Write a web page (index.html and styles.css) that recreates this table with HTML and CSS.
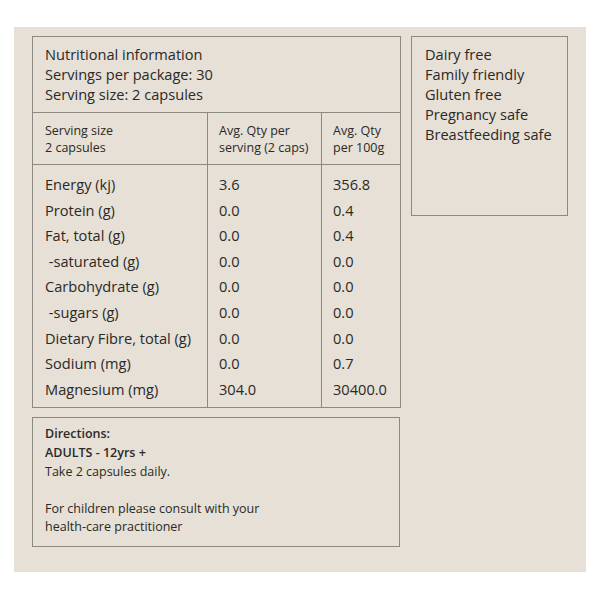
FILE: index.html
```html
<!DOCTYPE html>
<html lang="en">
<head>
<meta charset="utf-8">
<title>Nutritional information</title>
<link rel="stylesheet" href="styles.css">
</head>
<body>
<div class="panel">
  <div class="left-col">
    <table class="nutri">
      <colgroup>
        <col class="c1"><col class="c2"><col class="c3">
      </colgroup>
      <thead>
        <tr>
          <th colspan="3" class="intro">
            <div>Nutritional information</div>
            <div>Servings per package: 30</div>
            <div>Serving size: 2 capsules</div>
          </th>
        </tr>
        <tr class="sub">
          <th>Serving size<br>2 capsules</th>
          <th>Avg. Qty per<br>serving (2 caps)</th>
          <th>Avg. Qty<br>per 100g</th>
        </tr>
      </thead>
      <tbody>
        <tr class="first"><td>Energy (kj)</td><td>3.6</td><td>356.8</td></tr>
        <tr><td>Protein (g)</td><td>0.0</td><td>0.4</td></tr>
        <tr><td>Fat, total (g)</td><td>0.0</td><td>0.4</td></tr>
        <tr><td>&nbsp;-saturated (g)</td><td>0.0</td><td>0.0</td></tr>
        <tr><td>Carbohydrate (g)</td><td>0.0</td><td>0.0</td></tr>
        <tr><td>&nbsp;-sugars (g)</td><td>0.0</td><td>0.0</td></tr>
        <tr><td>Dietary Fibre, total (g)</td><td>0.0</td><td>0.0</td></tr>
        <tr><td>Sodium (mg)</td><td>0.0</td><td>0.7</td></tr>
        <tr class="last"><td>Magnesium (mg)</td><td>304.0</td><td>30400.0</td></tr>
      </tbody>
    </table>
    <div class="directions">
      <div class="strong">Directions:</div>
      <div class="strong">ADULTS - 12yrs +</div>
      <div>Take 2 capsules daily.</div>
      <div class="gap"></div>
      <div>For children please consult with your</div>
      <div>health-care practitioner</div>
    </div>
  </div>
  <div class="features">
    <div>Dairy free</div>
    <div>Family friendly</div>
    <div>Gluten free</div>
    <div>Pregnancy safe</div>
    <div>Breastfeeding safe</div>
  </div>
</div>
</body>
</html>
```
FILE: styles.css
```css
html, body {
  margin: 0;
  padding: 0;
  background: #ffffff;
}
body {
  font-family: "Open Sans", "Noto Sans", sans-serif;
  color: #2b2927;
}
.panel {
  margin: 27px 14px 0 14px;
  width: 572px;
  height: 545px;
  box-sizing: border-box;
  padding: 9px 18px;
  background: #e6e0d6;
  display: flex;
  align-items: flex-start;
  gap: 11px;
}
.left-col {
  width: 368px;
  display: flex;
  flex-direction: column;
  gap: 9px;
}
.nutri {
  width: 368px;
  border-collapse: collapse;
  table-layout: fixed;
  border: 1px solid #8d8880;
}
.nutri .c1 { width: 175px; }
.nutri .c2 { width: 114px; }
.nutri .c3 { width: 79px; }
.nutri th, .nutri td {
  text-align: left;
  font-weight: 400;
  vertical-align: top;
  padding: 0 0 0 11px;
}
.nutri .intro {
  font-size: 14.6px;
  line-height: 20px;
  padding: 7px 12px 8px 12px;
  border-bottom: 1px solid #8d8880;
}
.nutri .sub th {
  font-size: 12.5px;
  line-height: 17px;
  padding-top: 9px;
  padding-bottom: 8px;
  border-bottom: 1px solid #8d8880;
  border-right: 1px solid #8d8880;
}
.nutri td {
  font-size: 14.6px;
  line-height: 25.6px;
  border-right: 1px solid #8d8880;
  white-space: nowrap;
}
.nutri td:first-child, .nutri .sub th:first-child {
  padding-left: 12px;
}
.nutri tr.first td { padding-top: 7px; }
.nutri tr.last td { padding-bottom: 5px; }
.directions {
  border: 1px solid #8d8880;
  height: 130px;
  box-sizing: border-box;
  padding: 7px 12px 0 12px;
  font-size: 12.5px;
  line-height: 18.6px;
}
.directions .strong { font-weight: 600; }
.directions .gap { height: 18.6px; }
.features {
  width: 157px;
  height: 180px;
  box-sizing: border-box;
  border: 1px solid #8d8880;
  padding: 7px 13px;
  font-size: 14.6px;
  line-height: 20px;
}
```
